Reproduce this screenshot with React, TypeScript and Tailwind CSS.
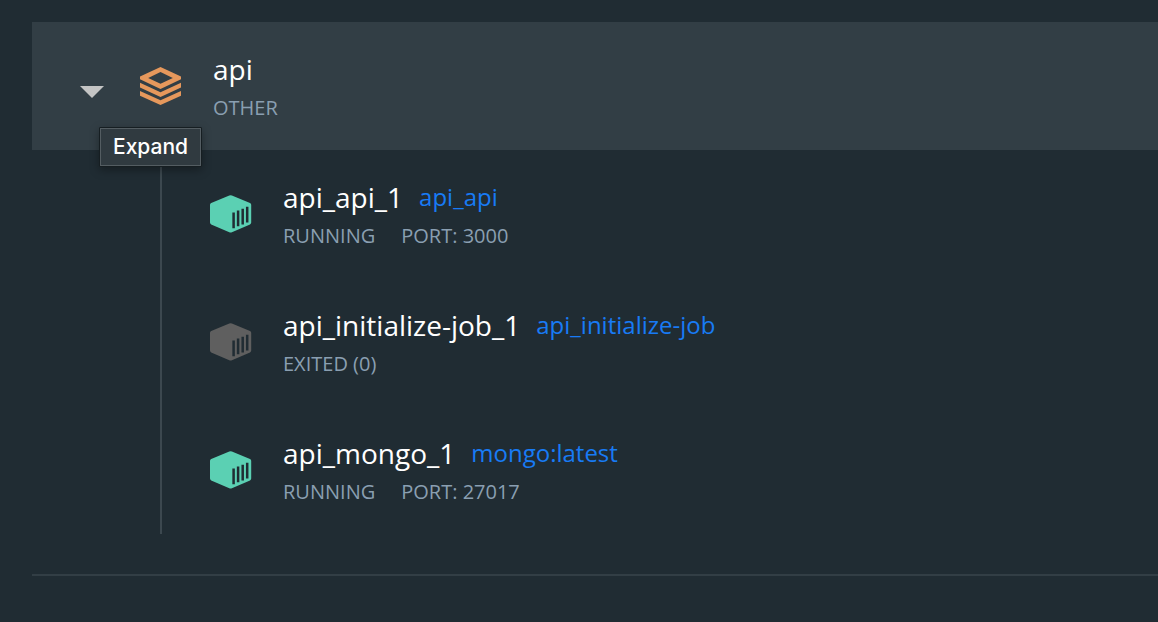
import React from "react";

type Container = {
  name: string;
  image: string;
  status: string;
  port?: string;
  running: boolean;
};

const containers: Container[] = [
  { name: "api_api_1", image: "api_api", status: "RUNNING", port: "PORT: 3000", running: true },
  { name: "api_initialize-job_1", image: "api_initialize-job", status: "EXITED (0)", running: false },
  { name: "api_mongo_1", image: "mongo:latest", status: "RUNNING", port: "PORT: 27017", running: true },
];

function StackIcon() {
  return (
    <svg viewBox="0 0 42 38" className="h-[38px] w-[42px] shrink-0" fill="#e6985c" aria-hidden="true">
      <path fillRule="evenodd" d="M20.5 0 41 9.5V12.2L20.5 22 0 12.2V9.5ZM20.5 5 8.2 10.9 20.5 16.8 32.8 10.9Z" />
      <path d="M0 15.8 20.5 25.2 41 15.8V20.6L20.5 30 0 20.6Z" />
      <path d="M0 23.9 20.5 33.2 41 23.9V28.7L20.5 38 0 28.7Z" />
    </svg>
  );
}

function ContainerIcon({ running }: { running: boolean }) {
  return (
    <svg
      viewBox="0 0 42 38"
      className={running ? "h-[38px] w-[42px] shrink-0 text-[#5bd0b3]" : "h-[38px] w-[42px] shrink-0 text-[#5f5f5f]"}
      aria-hidden="true"
    >
      <path
        fill="currentColor"
        d="M19.3.5Q20.6 0 21.9.5L40 7.9Q41.2 8.4 41.2 9.7V27.5Q41.2 28.8 40 29.4L21.9 37.2Q20.6 37.8 19.3 37.2L1.2 29.4Q0 28.8 0 27.5V9.7Q0 8.4 1.2 7.9Z"
      />
      <path
        fill="none"
        stroke="#202c33"
        strokeWidth="2.5"
        d="M23.6 17.6V33.2M28.1 15.6V31.3M32.7 13.8V29.5M37.2 11.8V27.4"
      />
    </svg>
  );
}

export default function App() {
  const [open, setOpen] = React.useState(true);
  return (
    <main className="min-h-screen bg-[#202c33] pt-[22px] pl-8 font-['Open_Sans',sans-serif]">
      <section className="border-b-2 border-[#323e45] pb-10">
        <header className="flex h-32 items-center bg-[#323e45] pl-10">
          <div className="relative mr-7 flex pt-3">
            <button
              type="button"
              aria-label="Expand"
              aria-expanded={open}
              aria-describedby="expand-tip"
              onClick={() => setOpen(!open)}
              className="flex h-10 w-10 cursor-pointer items-center justify-center"
            >
              <svg viewBox="0 0 24 12" className="h-3 w-6" fill="#c4c4c4" aria-hidden="true">
                <path d="M0 0H24L12 12Z" />
              </svg>
            </button>
            <span
              id="expand-tip"
              role="tooltip"
              className="absolute top-[67px] left-[27px] z-10 rounded-[1px] border border-[#161e22] bg-[#303a40] shadow-[0_3px_10px_rgba(0,0,0,0.35)]"
            >
              <span className="block border border-[#545d62] px-3 font-['Inter',sans-serif] text-[21px] leading-9 font-medium text-white">
                Expand
              </span>
            </span>
          </div>
          <StackIcon />
          <div className="ml-[31px] pt-1">
            <h1 className="text-[28px] leading-10 text-white">api</h1>
            <p className="text-xl leading-[38px] text-[#8a9fb1]">OTHER</p>
          </div>
        </header>
        {open && (
          <ul className="ml-32 border-l-2 border-[#3c484f]">
            {containers.map((c) => (
              <li key={c.name} className="flex h-32 items-center pl-12">
                <ContainerIcon running={c.running} />
                <div className="ml-[31px] pt-1">
                  <div className="flex items-center gap-4">
                    <h2 className="text-[28px] leading-10 text-white">{c.name}</h2>
                    <a href="#" className="text-2xl leading-10 text-[#187bf5]">
                      {c.image}
                    </a>
                  </div>
                  <p className="flex gap-[26px] text-xl leading-[38px] text-[#8a9fb1]">
                    <span>{c.status}</span>
                    {c.port && <span>{c.port}</span>}
                  </p>
                </div>
              </li>
            ))}
          </ul>
        )}
      </section>
    </main>
  );
}
